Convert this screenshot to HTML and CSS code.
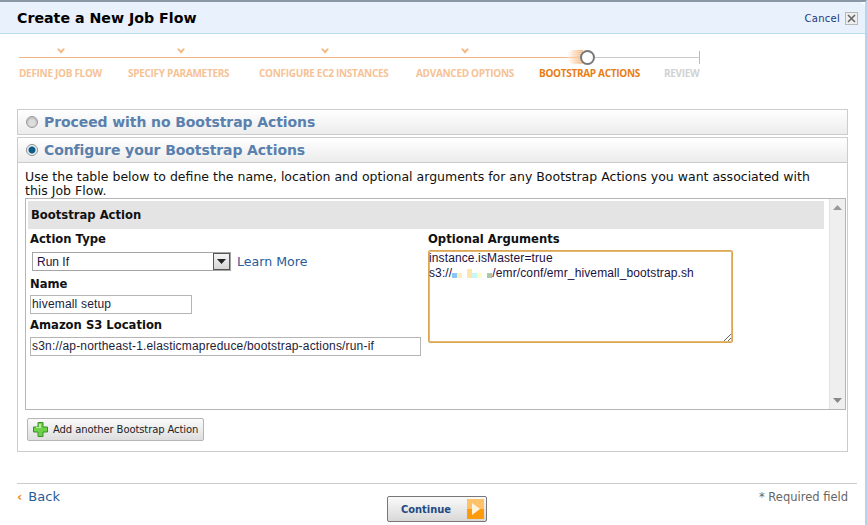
FILE: index.html
```html
<!DOCTYPE html>
<html lang="en">
<head>
<meta charset="utf-8">
<title>Create a New Job Flow</title>
<link rel="stylesheet" href="styles.css">
</head>
<body>
<div class="window">
  <header class="head">
    <h1 class="title">Create a New Job Flow</h1>
    <a class="cancel">Cancel</a>
    <span class="close"><svg width="9" height="9" viewBox="0 0 9 9"><path d="M1 1l7 7M8 1L1 8" stroke="#666" stroke-width="1.600" fill="none"/></svg></span>
  </header>

  <div class="stepper">
    <div class="step done">
      <div class="track"><svg class="check" width="8" height="6" viewBox="0 0 10 7"><path d="M0 1l2-1 3 3 3-3 2 1-5 6z" fill="#f2b987"/></svg></div>
      <div class="step-label">DEFINE JOB FLOW</div>
    </div>
    <div class="step done">
      <div class="track"><svg class="check" width="8" height="6" viewBox="0 0 10 7"><path d="M0 1l2-1 3 3 3-3 2 1-5 6z" fill="#f2b987"/></svg></div>
      <div class="step-label">SPECIFY PARAMETERS</div>
    </div>
    <div class="step done">
      <div class="track"><svg class="check" width="8" height="6" viewBox="0 0 10 7"><path d="M0 1l2-1 3 3 3-3 2 1-5 6z" fill="#f2b987"/></svg></div>
      <div class="step-label">CONFIGURE EC2 INSTANCES</div>
    </div>
    <div class="step done">
      <div class="track"><svg class="check" width="8" height="6" viewBox="0 0 10 7"><path d="M0 1l2-1 3 3 3-3 2 1-5 6z" fill="#f2b987"/></svg></div>
      <div class="step-label">ADVANCED OPTIONS</div>
    </div>
    <div class="step current">
      <div class="track"><span class="glow"></span><span class="dot"></span></div>
      <div class="step-label">BOOTSTRAP ACTIONS</div>
    </div>
    <div class="step todo">
      <div class="track"></div>
      <div class="step-label">REVIEW</div>
    </div>
  </div>

  <section class="panel collapsed">
    <div class="panel-head"><span class="radio"></span><span>Proceed with no Bootstrap Actions</span></div>
  </section>

  <section class="panel">
    <div class="panel-head"><span class="radio on"></span><span>Configure your Bootstrap Actions</span></div>
    <div class="panel-body">
      <p class="intro">Use the table below to define the name, location and optional arguments for any Bootstrap Actions you want associated with this Job Flow.</p>
      <div class="table-box">
        <div class="table-main">
          <div class="table-head">Bootstrap Action</div>
          <div class="form">
            <div class="col-left">
              <label class="lbl">Action Type</label>
              <div class="type-row">
                <div class="select"><span class="select-val">Run If</span><span class="select-btn"><svg width="9" height="5" viewBox="0 0 9 5"><path d="M0 0h9L4.500 5z" fill="#222"/></svg></span></div>
                <a class="learn">Learn More</a>
              </div>
              <label class="lbl lbl-name">Name</label>
              <div class="input input-name">hivemall setup</div>
              <label class="lbl lbl-loc">Amazon S3 Location</label>
              <div class="input input-loc">s3n://ap-northeast-1.elasticmapreduce/bootstrap-actions/run-if</div>
            </div>
            <div class="col-right">
              <label class="lbl">Optional Arguments</label>
              <div class="args">instance.isMaster=true<br>s3://<svg class="smudge" width="40" height="9" viewBox="0 0 40 9"><rect x="0" y="4" width="5" height="5" fill="#8cc4f5"/><rect x="5" y="4" width="5" height="5" fill="#fdeec0"/><rect x="15" y="0" width="5" height="9" fill="#fde5ab"/><rect x="20" y="4" width="5" height="5" fill="#c8f7f7"/><rect x="25" y="4" width="5" height="5" fill="#fdfbc8"/><rect x="35" y="4" width="5" height="5" fill="#aec7a8"/></svg>/emr/conf/emr_hivemall_bootstrap.sh</div>
            </div>
          </div>
        </div>
        <div class="scrollbar">
          <svg width="9" height="5" viewBox="0 0 9 5"><path d="M0 5h9L4.500 0z" fill="#999"/></svg>
          <svg width="9" height="5" viewBox="0 0 9 5"><path d="M0 0h9L4.500 5z" fill="#888"/></svg>
        </div>
      </div>
      <button class="add" type="button"><svg width="15" height="15" viewBox="0 0 15 15"><path d="M5 .5h5v4.500h4.500v5H10v4.500H5V10H.5V5H5z" fill="#6fd04a" stroke="#3b8f26"/><path d="M6 2h2v4H3V5h3z" fill="#b5ee96"/></svg><span>Add another Bootstrap Action</span></button>
    </div>
  </section>

  <footer class="foot">
    <a class="back"><span class="chev">‹</span>Back</a>
    <button class="continue" type="button"><span>Continue</span><span class="go"><svg width="8" height="12" viewBox="0 0 8 12"><path d="M0 0l8 6-8 6z" fill="#fff3dd"/></svg></span></button>
    <span class="req">* Required field</span>
  </footer>
</div>
</body>
</html>
```
FILE: styles.css
```css
* { box-sizing: border-box; }
html, body { margin: 0; padding: 0; background: #fff; }
body { font-family: "DejaVu Sans", Verdana, sans-serif; font-size: 13px; color: #111; overflow: hidden; }

.window {
  width: 867px; height: 525px;
  border-top: 2px solid #8a97a5;
  border-right: 2px solid #b5d5ee;
  display: flex; flex-direction: column;
}

.head {
  height: 32px; flex: none;
  background: #e8f1fc;
  border-bottom: 1px solid #bcdcf0;
  border-top-right-radius: 6px;
  display: flex; align-items: center;
  padding: 0 7px 0 17px;
}
.title { margin: 0; font-size: 14.200px; font-weight: 700; color: #000; flex: 1; }
.cancel { font-size: 10px; letter-spacing: .25px; color: #1a3a80; margin: 1px 5px 0 0; }
.close {
  width: 13px; height: 13px; margin-top: 1px;
  border: 1px solid #b8b8b8; background: #eee;
  display: flex; align-items: center; justify-content: center;
}

.stepper {
  display: grid;
  grid-template-columns: 83px 105px 131px 97px 99px 36px;
  column-gap: 26px;
  margin: 10px 0 0 19px;
  justify-content: start;
}
.track {
  height: 14px;
  margin-right: -26px; padding-right: 26px;
  border-bottom: 1px solid #f0b582;
  display: flex; justify-content: center; align-items: flex-start;
  position: relative;
}
.check { margin-top: 4px; }
.step-label {
  margin-top: 8px;
  font-family: "Open Sans", sans-serif;
  font-size: 10px; font-weight: 700; line-height: 14px;
  letter-spacing: -.3px;
  white-space: nowrap;
  color: #f6c295;
}
.current .step-label { color: #e97d14; }
.todo .step-label { color: #d2d2d2; }
.todo .track {
  margin-right: 0; padding-right: 0;
  border-bottom-color: #ccc;
}
.todo .track::after {
  content: ""; position: absolute;
  right: 0; bottom: -7px;
  width: 1px; height: 13px; background: #bbb;
}
.current .track::after {
  content: ""; position: absolute;
  left: 49px; right: 0; bottom: -1px;
  height: 1px; background: #ccc;
}
.glow {
  position: absolute; left: 28px; bottom: -7px;
  width: 16px; height: 14px;
  background: repeating-linear-gradient(to bottom, rgba(255,255,255,0) 0 1px, rgba(255,255,255,.3) 1px 2px),
    linear-gradient(to right, rgba(244,170,100,0), #f6b57a);
  border-radius: 8px 0 0 8px;
}
.dot {
  position: absolute; left: 41px; bottom: -8px; z-index: 1;
  width: 15px; height: 15px; border-radius: 50%;
  background: #fff; border: 2px solid #77797c;
}

.panel { margin: 0 17px; width: 831px; border: 1px solid #ccc; flex: none; }
.collapsed { margin-top: 29px; margin-bottom: 2px; }
.panel-head {
  height: 24px;
  background: linear-gradient(to bottom, #fff, #ececec);
  display: flex; align-items: center; gap: 6px;
  padding: 0 0 0 8px;
  font-size: 14px; font-weight: 700; letter-spacing: -.09px; color: #5a80ad;
  white-space: nowrap;
}
.panel .panel-body { border-top: 1px solid #ccc; padding: 7px 0 10px 7px; }
.radio {
  width: 12px; height: 12px; border-radius: 50%; flex: none;
  border: 1px solid #9a9a9a;
  background: radial-gradient(circle at 50% 60%, #ddd 0 3px, #c2c2c2 5px);
}
.radio.on {
  border-color: #8a8f94;
  background: radial-gradient(circle at 50% 50%, #0d5c88 0 3px, #eef2f4 4px);
}

.intro { margin: 0; font-size: 12.500px; line-height: 14px; padding-right: 20px; }

.table-box {
  width: 821px; height: 212px;
  border: 1px solid #b5b5b5;
  display: flex;
}
.table-main { flex: 1; padding: 2px 5px 0 2px; }
.table-head {
  height: 28px; background: #e4e4e4;
  display: flex; align-items: center; padding-left: 3px;
  font-size: 11.600px; font-weight: 700;
}
.scrollbar {
  width: 16px; background: #efefef; border-left: 1px solid #e2e2e2;
  display: flex; flex-direction: column; justify-content: space-between; align-items: center;
  padding: 6px 0 6px;
}

.form { display: grid; grid-template-columns: 398px 305px; padding: 3px 0 0 2px; }
.lbl { display: block; font-size: 11.600px; font-weight: 700; line-height: 14px; color: #111; }
.type-row { display: flex; align-items: center; margin: 6px 0 0 2px; gap: 6px; }
.select {
  width: 199px; height: 19px; border: 1px solid #a5a5a5;
  display: flex; align-items: center; justify-content: space-between;
  font-family: "Liberation Sans", Arial, sans-serif; font-size: 12px;
  padding-left: 4px;
  color: #1c1040;
}
.select-btn {
  width: 17px; height: 17px;
  background: linear-gradient(#f4f4f4, #d6d6d6);
  border: 1px solid #555;
  display: flex; align-items: center; justify-content: center;
}
.learn { font-size: 12.600px; color: #2a5b9b; }
.lbl-name { margin-top: 6px; }
.lbl-loc { margin-top: 4px; }
.input {
  height: 19px; border: 1px solid #b5b5b5; margin-top: 4px;
  font-family: "Liberation Sans", Arial, sans-serif; font-size: 12px; line-height: 17px;
  letter-spacing: .18px;
  padding-left: 1px; white-space: nowrap; color: #1c1c3a;
}
.input-name { width: 162px; }
.input-loc { width: 391px; margin-top: 5px; }
.args {
  margin-top: 4px;
  width: 305px; height: 93px;
  border: 1px solid #dba552; border-radius: 2px;
  box-shadow: inset 0 0 0 1px #e3b873;
  font-family: "Liberation Sans", Arial, sans-serif; font-size: 12px; line-height: 15px;
  letter-spacing: .12px;
  padding: 0;
  color: #1c1040;
  overflow: hidden; resize: both;
}
.smudge { vertical-align: -1px; }

.add {
  margin: 8px 0 0 2px;
  width: 177px; height: 23px;
  border: 1px solid #b5b5b5; border-radius: 2px;
  background: linear-gradient(#fafafa, #dedede);
  display: flex; align-items: center; gap: 5px; padding: 0 0 0 5px;
  font-family: "DejaVu Sans", sans-serif; font-size: 10px; letter-spacing: -.1px; color: #222;
}

.foot {
  flex: none;
  margin: 31px 8px 0 17px;
  border-top: 1px solid #ccc;
  display: grid; grid-template-columns: 1fr auto 1fr; align-items: start;
  height: 40px;
}
.back { font-size: 13px; color: #2a5b9b; margin-top: 5px; }
.chev { color: #ef8a2a; font-weight: 700; margin-right: 6px; }
.continue {
  margin-top: 12px; width: 100px; height: 26px;
  border: 1px solid #777; border-radius: 2px;
  background: linear-gradient(#fafafa, #d8d8d8);
  display: flex; align-items: center; justify-content: space-between;
  padding: 0 1px 0 13px;
  font-family: "DejaVu Sans Condensed", "DejaVu Sans", sans-serif; font-size: 11px; font-weight: 700; color: #1e4a85;
}
.go {
  width: 17px; height: 20px;
  background: linear-gradient(#ffc268 0 50%, #ff9a0a 50%);
  display: flex; align-items: center; justify-content: center;
  margin-right: 1px;
}
.req { font-size: 11.500px; color: #666; margin: 6px 9px 0 0; justify-self: end; }
```
